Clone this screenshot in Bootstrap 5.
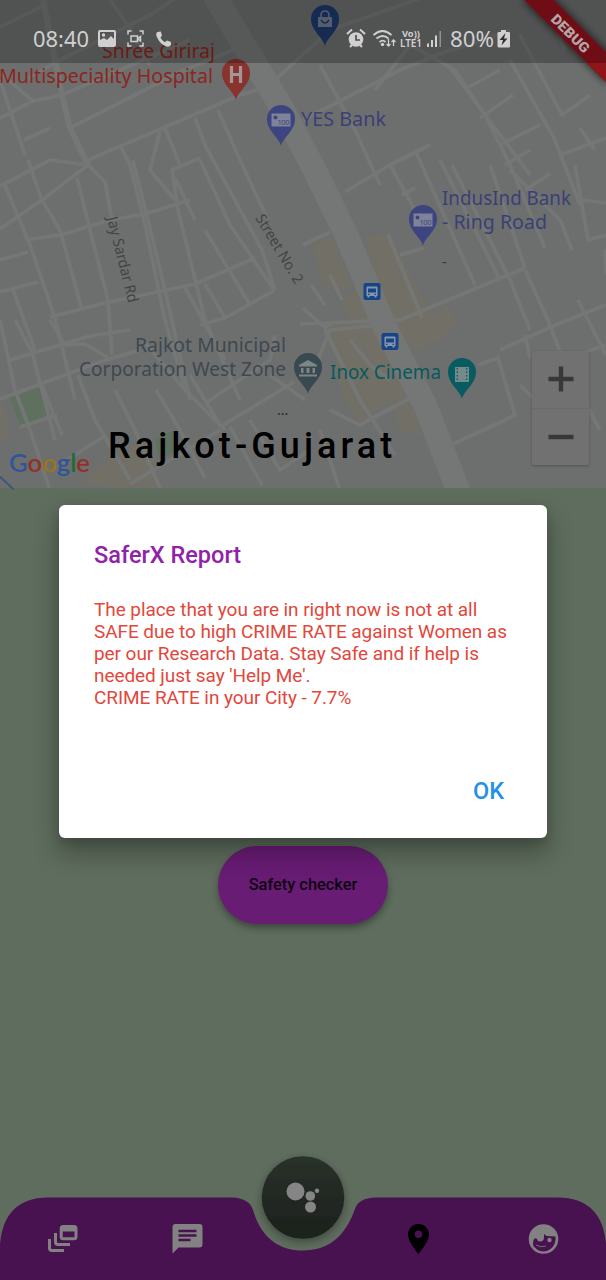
<!DOCTYPE html>
<html lang="en">
<head>
<meta charset="utf-8">
<meta name="viewport" content="width=device-width, initial-scale=1">
<title>SaferX</title>
<link href="https://cdn.jsdelivr.net/npm/bootstrap@5.3.0/dist/css/bootstrap.min.css" rel="stylesheet">
<style>
body{font-family:Roboto,"Noto Sans",sans-serif;background:#5e6d5d;overflow:hidden}
.screen{width:606px;height:1280px}
.map-area{height:490px;background:#6d6f6e}
.map-area text{font-family:"Noto Sans",sans-serif}
.status{height:63px;background:rgba(0,0,0,.25);color:#d0d0d0;padding:15px 0 0 33px;font-family:"Noto Sans",sans-serif}
.status svg{display:block}
.ribbon{right:0;top:0}
.zoom-box{right:17px;top:351px;width:57px;height:114px;background:#717171;box-shadow:0 1px 3px rgba(0,0,0,.25);border-radius:2px}
.zoom-box div+div{border-top:1px solid #6a6a6a}
.place{left:108px;top:423px;font-size:36px;line-height:46px;font-weight:500;letter-spacing:4.1px;color:#000;white-space:nowrap}
.report{left:59px;top:505px;width:488px;height:333px;border:0;border-radius:6px;background:#fff;box-shadow:0 14px 24px 2px rgba(0,0,0,.28),0 4px 10px rgba(0,0,0,.12);padding:35px 35px 32px}
.report h1{font-size:23.5px;line-height:30px;font-weight:500;color:#9023a8;margin:0}
.report p{font-size:19px;line-height:22.1px;color:#e2473c;margin:29px 0 0;white-space:nowrap;letter-spacing:-.07px}
.ok{color:#2490e6;font-size:23.5px;line-height:30px;font-weight:500;padding:0 8px;border:0;background:none}
.check{width:170px;height:78px;border-radius:39px;margin-top:356px;background:#681c74;color:#0d0310;border:0;font-size:16.4px;font-weight:500;box-shadow:0 4px 7px rgba(0,0,0,.35)}
.dock{height:140px}
</style>
</head>
<body>
<div class="screen position-relative d-flex flex-column overflow-hidden">
<section class="map-area position-relative flex-shrink-0">
<svg class="position-absolute top-0 start-0" width="606" height="490" viewBox="0 0 606 490">
<defs>
<path id="pin" d="M0 26C-2 17-14 11-14-1A14 14 0 1 1 14-1C14 11 2 17 0 26z"/>
<g id="bus"><rect width="17" height="17" rx="2" fill="#164688"/><path d="M4 3.500h9q1 0 1 1V13h-1v1.500h-2V13H6v1.500H4V13H3V4.500q0-1 1-1z" fill="#8795a8"/><path d="M4.500 5.500h8v4h-8zM4.500 10.800h1.500v1.200H4.500zm6.500 0h1.500v1.200H11z" fill="#164688"/></g>
</defs>
<g fill="#727066">
<path d="M313 245l18-9 21 50-12 7-18-9zM366 237l22-4 28 52 28 52-28 14-30-20zM340 300l26-14 30 60 25 90-20-5-30-80zM330 325l45-15 30 80-45 33-20-33z"/>
<path d="M410 325l38-20 10 18-32 24zM0 400l8 20v18l-8 4zM80 484l45-38 30-3v34l-20 11zM140 484l20-6 5 12h-28z"/>
</g>
<g fill="#5f705f"><path d="M10 397l34-11 8 27-32 13zM155 439l18-8 4 20-18 8z"/></g>
<g fill="none" stroke="#757776" stroke-width="3.700" stroke-linejoin="round">
<path stroke-width="24" d="M214-5L250 55 283 110 312 165 345 232 384 325 425 405 460 495"/>
<path stroke-width="6" d="M42-5L62 95 70 128 88 165"/>
<path d="M0 186L50 160 88 165 42 200 0 229M0 118L33 101 62 95M0 27L45 5M0 73L33 101M28 78L60 60 150 15 180-5M62 95L190 40M70 128L180 72 245 45M88 160L240 95 275 85M110 0L130 28 150 65M0 80L25 155M24 140L50 128M120 145L130 165 145 225 165 320 185 390M165 128L180 165M195 118L205 145 262 250 275 290M218 110L240 160 268 220M160 132L150 170 175 200M172 170L200 158M175 178L195 220M88 165L105 182 112 220M25 240L60 235 110 220 145 214 190 200M4 183L30 245 55 318 75 400M28 160L42 200 60 230 82 310M77 178L90 230 108 300 112 355M133 160L148 220 165 290 190 400M172 168L178 210 205 320 240 400M205 230L250 305M200 160L230 225 274 290M50 317L105 303 195 284 255 258M185 288L225 360M205 284L225 318 275 290M225 318L200 325M0 260L28 252M0 292L38 282M13 290L35 350"/>
<path d="M0 399L100 362 140 350M10 360L90 336 130 330M0 320L15 390 30 430 50 490M15 320L32 352 55 440M50 320L65 345 85 344 112 360M42 386L62 435M20 427L57 415M78 375L95 420 130 480M115 390L135 430 160 488M156 390L180 430 205 478M190 375L220 425M207 402L270 360 275 335M220 427L294 382M130 484L220 430M62 463L105 436M145 343L185 390 225 430M270 375L305 400M230 427L262 485M250 420L280 470 310 450"/>
<path d="M275 80L330 30 430-5M303 120L400 70 450 50M320 65L355 130 380 185M375 90L410 45 455 70 485 115 510 165 545 248M425 58L470 45 510 30M450 68L530 175M467 88L500 70M480 118L513 95M500 145L540 125M505 165L530 150M510 60L555 140 580 205M520 35L562 115 590 95M545 0L565 50M580 128L595 150M560 155L606 138M575 165L588 240 606 235M345 192L390 165 430 145M390 165L415 210M402 195L415 188M415 150L475 285M440 160L500 280M452 165L510 280 530 330M490 165L525 268M510 170L560 220 572 250M525 190L550 174M582 200L606 203M300 324L400 320 525 268M388 235L415 300 422 318M400 255L424 248M303 245L330 232M303 308L325 328 335 322M330 275L342 300M311 285L325 305M525 270L548 320 565 365 600 430M440 450L505 420 515 415 498 358 478 365M500 350L560 323 606 305M520 385L540 405M525 335L530 358M578 300L606 355M548 365L606 345M605 250L606 275M325 330L360 400M350 340L370 365 390 380M330 410L360 425 410 398M360 400L395 455M310 380L330 330 380 325M320 430L340 490"/>
</g>
<path d="M0 488h606v2H0z" fill="#5f6f5f"/>
<g font-size="20" fill="#8c251f">
<text x="102" y="58" textLength="113" lengthAdjust="spacingAndGlyphs">Shree Giriraj</text>
<text x="-1" y="83" textLength="214" lengthAdjust="spacingAndGlyphs">Multispeciality Hospital</text></g>
<g fill="#3b3f76" font-size="20"><text x="301" y="126" textLength="85" lengthAdjust="spacingAndGlyphs">YES Bank</text><text x="442" y="205" textLength="129" lengthAdjust="spacingAndGlyphs">IndusInd Bank</text><text x="442" y="229" textLength="105" lengthAdjust="spacingAndGlyphs">- Ring Road</text></g>
<g fill="#3e4850" font-size="20"><text x="135" y="352" textLength="151" lengthAdjust="spacingAndGlyphs">Rajkot Municipal</text><text x="79" y="376" textLength="207" lengthAdjust="spacingAndGlyphs">Corporation West Zone</text></g>
<text x="330" y="379" font-size="20" fill="#07595d" textLength="111" lengthAdjust="spacingAndGlyphs">Inox Cinema</text>
<g fill="#414443" font-size="15"><text transform="translate(107 218) rotate(76)" textLength="88" lengthAdjust="spacingAndGlyphs">Jay Sardar Rd</text><text transform="translate(255 218) rotate(59)" textLength="78" lengthAdjust="spacingAndGlyphs">Street No. 2</text></g>
<text x="442" y="267" font-size="15" fill="#353b3b">-</text><text x="277" y="415" font-size="14" fill="#252929">...</text>
<use href="#pin" x="236" y="74" fill="#89332e"/><path d="M231.500 66v17M240.500 66v17M231.500 74.500h9" stroke="#a39694" stroke-width="3.200"/>
<use href="#pin" x="325" y="20" fill="#1c3a70"/><path d="M318 17h14v10h-14z" fill="#717d91"/><path d="M321 17v-2a4 4 0 0 1 8 0v2" fill="none" stroke="#717d91" stroke-width="1.600"/><path d="M321 20q4 6 8 0" fill="none" stroke="#1c3a70" stroke-width="1.500"/>
<g id="bank"><use href="#pin" x="281" y="120" fill="#3d4580"/><path d="M271.500 113.500h19v13h-19z" fill="#7f8398"/><circle cx="275.500" cy="117.500" r="2" fill="#3d4580"/><text x="277.500" y="125" font-size="7.500" fill="#3d4580" textLength="12">100</text></g>
<use href="#bank" x="142" y="100"/>
<use href="#pin" x="308" y="368" fill="#394950"/><path d="M299 365l9-5 9 5v1.500h-18zM301 368h2.500v5H301zm5.500 0h3v5h-3zm6 0h2.500v5h-2.500zM299 374.500h18v2h-18z" fill="#7d8587"/>
<use href="#pin" x="462" y="373" fill="#075b61"/><path d="M455 367h14v15h-14z" fill="#73898a"/><path d="M457.300 368v14M466.700 368v14" stroke="#075b61" stroke-width="1.300" stroke-dasharray="1.500 2"/>
<use href="#bus" x="363.500" y="283"/><use href="#bus" x="381.500" y="333"/>
<path d="M-1 476q6 5 15 14" stroke="#40577a" stroke-width="2" fill="none"/>
<text x="9" y="472" font-size="25" style="font-family:Lato" font-weight="600" textLength="81" lengthAdjust="spacingAndGlyphs"><tspan fill="#31559a">G</tspan><tspan fill="#943028">o</tspan><tspan fill="#987614">o</tspan><tspan fill="#31559a">g</tspan><tspan fill="#226b34">l</tspan><tspan fill="#943028">e</tspan></text>
</svg>
<div class="status position-relative">
<svg width="490" height="45" viewBox="33 15 490 45" fill="#d0d0d0">
<text x="33" y="47" font-size="22.500" textLength="56" lengthAdjust="spacingAndGlyphs">08:40</text>
<path fill-rule="evenodd" d="M100 30h14q2 0 2 2v13q0 2-2 2h-14q-2 0-2-2V32q0-2 2-2zm0 2v8l4-2 3 2 4-4 3 3v-7z"/><circle cx="103.500" cy="35" r="1.700"/>
<g fill="none" stroke="#d0d0d0" stroke-width="1.500"><path d="M131.500 31H128v3.500M139.500 31h3.500v3.500M128 42.500V46h3.500M143 42.500V46h-3.500M131 36h6.500v5.500H131zM138 38.500l2.500-2v4.500l-2.500-2"/></g>
<path d="M157.500 32q-2 1-1 4 3 8 10 10.500 3 .7 4.500-1.500v-3l-4-1.500-2.200 1.700q-3-1.500-4.300-4.700l1.500-2-1.200-4z"/>
<g><circle cx="356" cy="39.500" r="7.300"/><path d="M347 34l5-4.500M365 34l-5-4.500M350 47l2-2M362 47l-2-2" stroke="#d0d0d0" stroke-width="2"/><path d="M356 35v5h4" fill="none" stroke="#4d504f" stroke-width="1.700"/></g>
<g fill="none" stroke="#d0d0d0" stroke-width="1.800"><path d="M373.500 35q9-8 18 0M376.500 38.500q6.500-5 12 0M379.500 42q3.300-2.700 6 0"/><path d="M388.500 39v7m-2-2l2 2 2-2M393.500 46v-6m-2 2l2-2 2 2" stroke-width="1.300"/></g><circle cx="382.500" cy="44.500" r="1.700"/>
<text x="402" y="37" font-size="9.500" font-weight="700" textLength="18" lengthAdjust="spacingAndGlyphs">Vo))</text><text x="400" y="47" font-size="10.500" font-weight="600" textLength="22" lengthAdjust="spacingAndGlyphs">LTE1</text>
<path d="M427 43.500h2V47h-2zM431 40h2v7h-2zM435 35.500h2V47h-2z"/><path d="M439.500 31h1.500v16h-1.500z" opacity=".5"/>
<text x="450" y="47" font-size="22.500" textLength="44" lengthAdjust="spacingAndGlyphs">80%</text>
<path d="M501 30h5v2h3q1 0 1 1v13q0 1.500-1 1.500h-10q-1.500 0-1.500-1.500V33q0-1 1.500-1h2z"/><path d="M505.500 33l-6 7h3.500l-1.500 5.500 6-7H504z" fill="#303231"/>
</svg>
</div>
<svg class="position-absolute ribbon" width="90" height="90" viewBox="516 0 90 90"><defs><filter id="s" x="-30%" y="-30%" width="160%" height="160%"><feDropShadow dx="0" dy="0" stdDeviation="4" flood-color="#000" flood-opacity=".8"/></filter></defs>
<path d="M522-2L608 84V54L552-2z" fill="#6e0f12" filter="url(#s)"/><path d="M587 63h19v19z" fill="#8f1518"/>
<text transform="translate(550 20) rotate(45)" font-size="14" style="font-family:Roboto" font-weight="900" fill="#b5a6a6" textLength="48" lengthAdjust="spacingAndGlyphs">DEBUG</text></svg>
<div class="zoom-box position-absolute d-flex flex-column">
<div class="flex-fill d-flex align-items-center justify-content-center"><svg width="26" height="26"><path d="M0.500 13h25M13 .5v25" stroke="#383838" stroke-width="4.400"/></svg></div>
<div class="flex-fill d-flex align-items-center justify-content-center"><svg width="26" height="26"><path d="M.5 13h25" stroke="#383838" stroke-width="4.400"/></svg></div>
</div>
<div class="place position-absolute">Rajkot-Gujarat</div>
</section>
<main class="flex-grow-1 d-flex flex-column align-items-center">
<button class="check">Safety checker</button>
</main>
<nav class="dock flex-shrink-0">
<svg class="d-block" width="606" height="140" viewBox="0 1140 606 140">
<defs><linearGradient id="g" x2="0" y2="1"><stop stop-color="#29312a"/><stop offset="1" stop-color="#1c201c"/></linearGradient><filter id="f" x="-30%" y="-30%" width="160%" height="160%"><feDropShadow dx="0" dy="3" stdDeviation="4" flood-opacity=".35"/></filter></defs>
<path d="M0 1280V1244Q4 1198 48 1197.500H232Q249 1198 253 1210C261 1237 278 1250.500 303 1250.500S345 1237 355 1209Q358 1198 376 1197.500H558Q602 1198 606 1244V1280z" fill="#48114f"/>
<circle cx="303" cy="1197.500" r="41.300" fill="url(#g)" filter="url(#f)"/>
<g fill="#858585"><circle cx="295.500" cy="1191.500" r="9"/><circle cx="310.300" cy="1196" r="4.800"/><circle cx="310.500" cy="1207" r="5.500"/><circle cx="317" cy="1190.800" r="2.200"/></g>
<g fill="none" stroke="#828282" stroke-width="3"><path d="M49.500 1239v9q0 2.500 2.500 2.500h12M55.500 1233v9q0 2.500 2.500 2.500h12"/><rect x="61.200" y="1226.500" width="14.800" height="12.300" rx="2"/></g><path d="M61 1226h15v5.500H61z" fill="#828282"/>
<path d="M175.500 1224h24q3 0 3 3v17.500q0 3-3 3h-21l-6 6V1227q0-3 3-3z" fill="#828282"/><path d="M178.500 1231h18M178.500 1235.500h18M178.500 1240h12" stroke="#48114f" stroke-width="2.600"/>
<path fill-rule="evenodd" d="M418.500 1224c-6 0-10.500 4.700-10.500 10.500 0 7.500 10.500 19.500 10.500 19.500S429 1242 429 1234.500c0-5.800-4.500-10.500-10.500-10.500zm0 6.500a3.800 3.800 0 1 1 0 7.600 3.800 3.800 0 0 1 0-7.600z" fill="#000"/>
<circle cx="543.500" cy="1239" r="14.800" fill="#828282"/><path d="M533.500 1240q1.500-3 3.500-1 .5 2.500 3 2.500 4 0 4-4V1234l2.500 2 9 .5q.5 4-1 7.500-3 6.500-10.500 7.500-6 0-9-4-3-1-1.500-7.500z" fill="#48114f"/><circle cx="549.500" cy="1240" r="2.200" fill="#828282"/><path d="M536 1245q5 3 10 1" fill="none" stroke="#828282" stroke-width=".8"/>
</svg>
</nav>
<section class="card report position-absolute" role="dialog" aria-label="SaferX Report">
<h1>SaferX Report</h1>
<p>The place that you are in right now is not at all<br>SAFE due to high CRIME RATE against Women as<br>per our Research Data. Stay Safe and if help is<br>needed just say 'Help Me'.<br>CRIME RATE in your City - 7.7%</p>
<div class="mt-auto d-flex justify-content-end"><button class="ok">OK</button></div>
</section>
</div>
<script src="https://cdn.jsdelivr.net/npm/bootstrap@5.3.0/dist/js/bootstrap.bundle.min.js"></script>
</body>
</html>
